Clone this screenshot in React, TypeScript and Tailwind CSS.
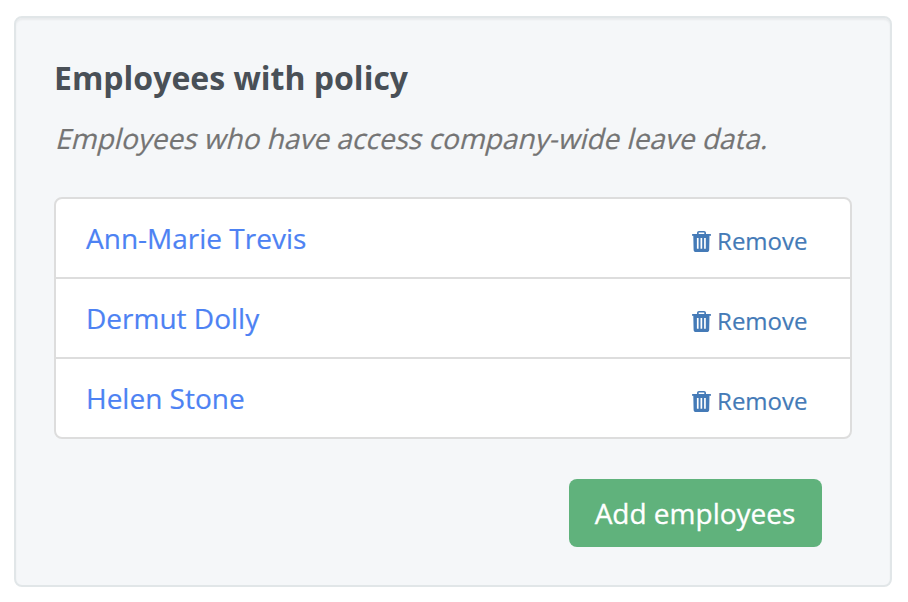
const people = ['Ann-Marie Trevis', 'Dermut Dolly', 'Helen Stone'];

function TrashIcon() {
  return (
    <svg width="19" height="21" viewBox="0 0 19 21" fill="currentColor" className="shrink-0">
      <path fillRule="evenodd" d="M5 3V2C5 .8 5.800 0 7 0h5c1.200 0 2 .8 2 2v1h4.500l.5.500V4.700H17.500L17.200 18.700c0 1.400-1 2.300-2.300 2.300H3.900C2.600 21 1.600 20.100 1.600 18.700L1.300 4.700H0V3.500L.5 3H5Zm1.700 0h5.600V1.500H6.700V3ZM4.900 7v10.700h1.700V7H4.900Zm3.600 0v10.700h1.700V7H8.500Zm3.600 0v10.700h1.700V7h-1.700Z" />
    </svg>
  );
}

export default function App() {
  return (
    <div className="h-[602px] w-[908px] bg-white pt-4 pl-[14px] font-['Open_Sans',sans-serif]">
      <section className="h-[571px] w-[878px] rounded-[8px] border-2 border-[#e1e6e8] bg-[#f5f7f9] px-[38px] pt-[38px] shadow-[inset_0_2px_2px_rgba(0,0,0,0.05)]">
        <h2 className="h-[44px] text-[32px] leading-[44px] font-bold whitespace-nowrap text-[#495057]">Employees with policy</h2>
        <p className="mt-[18px] ml-[0.5px] h-[40px] w-max origin-[0_30px] -skew-x-[14deg] text-[28px] leading-[40px] whitespace-nowrap text-[#747474] [-webkit-text-stroke:0.2px]">Employees who have access company-wide leave data.</p>
        <ul className="mt-[39px] w-[798px] divide-y-2 divide-[#dddddd] rounded-[8px] border-2 border-[#dddddd] bg-white">
          {people.map((name) => (
            <li key={name} className="flex h-[80px] items-center justify-between pr-[42.5px] pl-[30px] last:h-[78px]">
              <a className="text-[28px] leading-[40px] text-[#4d82f3] [-webkit-text-stroke:0.2px]">{name}</a>
              <a className="mt-[6px] flex items-center gap-[6px] text-[24px] leading-[34px] text-[#447ab7] [-webkit-text-stroke:0.2px]">
                <TrashIcon />
                Remove
              </a>
            </li>
          ))}
        </ul>
        <button className="mt-[40px] ml-[515px] block h-[68px] w-[253px] rounded-[8px] bg-[#60b27c] pr-px text-[28px] leading-[40px] text-white [-webkit-text-stroke:0.3px]">Add employees</button>
      </section>
    </div>
  );
}
